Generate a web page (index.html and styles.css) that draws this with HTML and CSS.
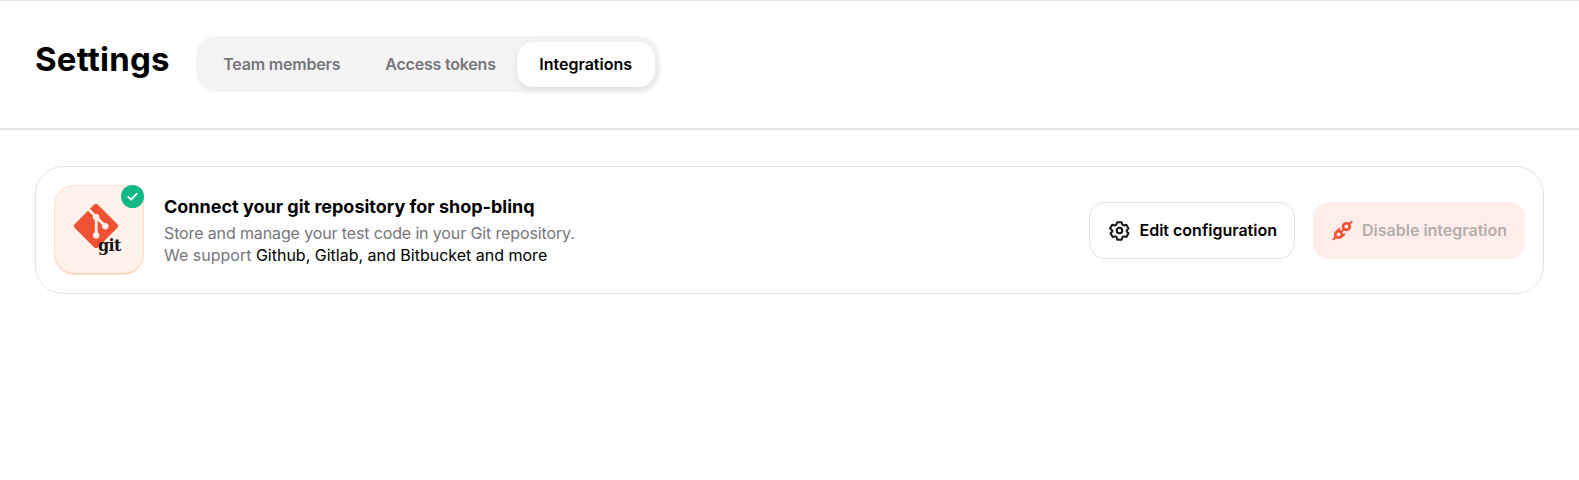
FILE: index.html
```html
<!DOCTYPE html>
<html lang="en">
<head>
<meta charset="utf-8">
<title>Settings</title>
<link rel="stylesheet" href="styles.css">
</head>
<body>
<header class="header">
  <h1 class="title">Settings</h1>
  <nav class="tabs">
    <a class="tab">Team members</a>
    <a class="tab">Access tokens</a>
    <a class="tab tab-active">Integrations</a>
  </nav>
</header>
<main class="content">
  <section class="card">
    <div class="logo">
      <svg class="git-mark" viewBox="0 0 92 92" aria-hidden="true">
        <path fill="#f05033" d="M90.2 41.9 50.1 1.8a5.9 5.9 0 0 0-8.4 0l-8.3 8.3 10.6 10.6a7 7 0 0 1 8.9 8.9l10.2 10.2a7 7 0 1 1-4.2 4L49.400 34.300v25a7 7 0 1 1-5.800-.2V33.800a7 7 0 0 1-3.800-9.200L29.300 14.200 1.800 41.700a5.900 5.900 0 0 0 0 8.400l40.100 40.100a5.900 5.900 0 0 0 8.400 0l39.900-39.900a5.900 5.900 0 0 0 0-8.400z"/>
      </svg>
      <span class="git-word">git</span>
      <span class="badge">
        <svg viewBox="0 0 24 24" aria-hidden="true"><path d="M6 12.500l4 4 8-8.500" fill="none" stroke="#fff" stroke-width="2.600" stroke-linecap="round" stroke-linejoin="round"/></svg>
      </span>
    </div>
    <div class="copy">
      <h2 class="copy-title">Connect your git repository for shop-blinq</h2>
      <p class="copy-line copy-line-tight">Store and manage your test code in your Git repository.</p>
      <p class="copy-line">We support <span class="strong">Github, Gitlab, and Bitbucket and more</span></p>
    </div>
    <div class="actions">
      <button class="btn btn-outline">
        <svg class="btn-icon" viewBox="0 0 24 24" aria-hidden="true" fill="none" stroke="#17171c" stroke-width="2.300" stroke-linejoin="round">
          <path d="M9.500 2.500h5l.8 2.900 1.600.9 2.900-.8 2.500 4.300-2.100 2.100v1.200l2.100 2.100-2.500 4.300-2.900-.8-1.600.9-.8 2.900h-5l-.8-2.900-1.600-.9-2.900.8-2.500-4.300 2.100-2.100v-1.200L1.200 9.800l2.500-4.300 2.900.8 1.600-.9z"/>
          <circle cx="12" cy="12" r="3.200"/>
        </svg>
        Edit configuration
      </button>
      <button class="btn btn-danger">
        <svg class="btn-icon" viewBox="0 0 24 24" aria-hidden="true" fill="none" stroke="#f0502f" stroke-linecap="round">
          <g stroke-width="3">
            <circle cx="7.500" cy="16.500" r="3.800"/>
            <circle cx="16.500" cy="7.500" r="3.800"/>
          </g>
          <path stroke-width="2.200" d="M4.500 19.500 1.500 22M19.500 4.500l3-2.500M10.500 13.500l3-3M7 11.500l1.500-1.500M14 16.500l-1.500 1.500"/>
        </svg>
        <span class="btn-danger-label">Disable integration</span>
      </button>
    </div>
  </section>
</main>
</body>
</html>
```

FILE: styles.css
```css
* { box-sizing: border-box; }
html, body { margin: 0; padding: 0; background: #fff; }
body {
  font-family: Inter, "Noto Sans", "Liberation Sans", sans-serif;
  color: #000;
  height: 480px;
  overflow: hidden;
  border-top: 1px solid #e6e6e6;
}
.header {
  height: 129px;
  padding: 35px 35px 0;
  display: flex;
  align-items: flex-start;
  gap: 26px;
  border-bottom: 2px solid #e6e6e6;
}
.title {
  margin: 0;
  font-size: 33px;
  line-height: 46px;
  font-weight: 700;
  letter-spacing: 0.2px;
}
.tabs {
  display: flex;
  align-items: center;
  height: 55px;
  padding: 1px 4px 0 5px;
  border-radius: 20px;
  background: #f4f4f4;
  box-shadow: 1px 1px 2px rgba(0,0,0,.05);
}
.tab {
  height: 45px;
  padding: 0 22.500px;
  display: flex;
  align-items: center;
  font-size: 16px;
  font-weight: 600;
  letter-spacing: -0.2px;
  color: #77767c;
  border-radius: 16px;
}
.tab-active {
  margin-left: -1.500px;
  padding: 0 22.500px;
  background: #fff;
  color: #000;
  letter-spacing: 0;
  box-shadow: 0 3px 8px rgba(0,0,0,.09);
}
.content { padding: 36px 35px 0; }
.card {
  width: 1509px;
  height: 128px;
  padding: 0 18.500px 0 18px;
  display: flex;
  align-items: center;
  border: 1px solid #e4e4e4;
  border-radius: 28px;
  background: #fff;
}
.logo {
  position: relative;
  flex: none;
  width: 90px;
  height: 90px;
  border-radius: 20px;
  background: #fff2ea;
  border: 1px solid #ffdfc9;
  box-shadow: inset 0 -1px 1px #ffcfae;
}
.git-mark {
  position: absolute;
  left: 19px;
  top: 18px;
  width: 44px;
  height: 44px;
}
.git-word {
  position: absolute;
  left: 43px;
  top: 50px;
  font-family: "DejaVu Serif", serif;
  font-size: 16px;
  line-height: 20px;
  font-weight: 700;
  letter-spacing: -0.6px;
  color: #111;
}
.badge {
  position: absolute;
  right: -1px;
  top: -1px;
  width: 23px;
  height: 23px;
  border-radius: 50%;
  background: #12b886;
  display: flex;
  align-items: center;
  justify-content: center;
}
.badge svg { width: 17px; height: 17px; }
.copy { margin-left: 20px; flex: 1; }
.copy-title {
  margin: 0 0 2px;
  font-size: 18px;
  line-height: 26px;
  font-weight: 700;
}
.copy-line {
  margin: 0;
  font-size: 16px;
  line-height: 22.500px;
  color: #77767c;
}
.copy-line-tight { letter-spacing: -0.13px; }
.strong { color: #000; }
.actions { display: flex; gap: 18px; }
.btn {
  height: 57px;
  display: flex;
  align-items: center;
  gap: 10px;
  border-radius: 16px;
  font-family: inherit;
  font-size: 16px;
  font-weight: 600;
  white-space: nowrap;
}
.btn-icon { width: 21px; height: 21px; flex: none; }
.btn-outline {
  width: 206px;
  padding: 0 0 0 19px;
  background: #fff;
  border: 1px solid #e4e4e4;
  color: #000;
}
.btn-danger {
  width: 212px;
  padding: 0 0 0 19px;
  gap: 9.500px;
  background: #ffedea;
  border: 0;
}
.btn-danger-label { color: #b3adac; }
```
